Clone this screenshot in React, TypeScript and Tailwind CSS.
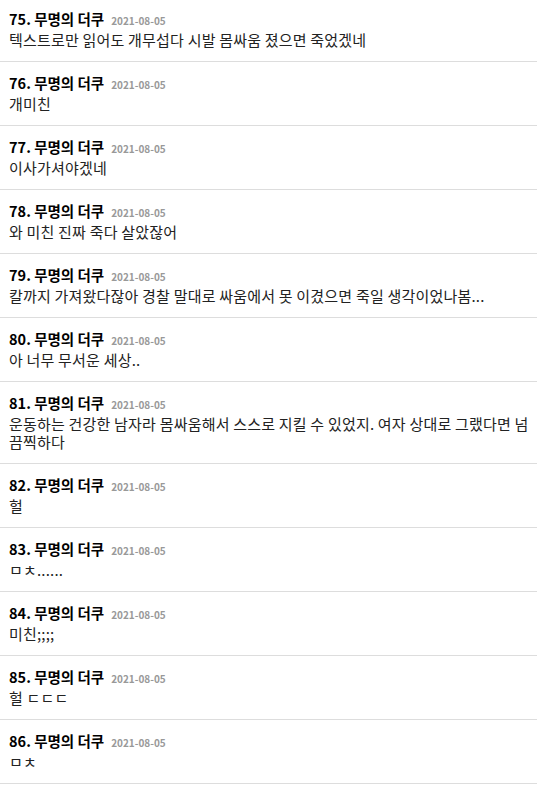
import React from 'react';

const comments: { n: number; text: string }[] = [
  { n: 75, text: '텍스트로만 읽어도 개무섭다 시발 몸싸움 졌으면 죽었겠네' },
  { n: 76, text: '개미친' },
  { n: 77, text: '이사가셔야겠네' },
  { n: 78, text: '와 미친 진짜 죽다 살았잖어' },
  { n: 79, text: '칼까지 가져왔다잖아 경찰 말대로 싸움에서 못 이겼으면 죽일 생각이었나봄...' },
  { n: 80, text: '아 너무 무서운 세상..' },
  { n: 81, text: '운동하는 건강한 남자라 몸싸움해서 스스로 지킬 수 있었지. 여자 상대로 그랬다면 넘 끔찍하다' },
  { n: 82, text: '헐' },
  { n: 83, text: 'ㅁㅊ......' },
  { n: 84, text: '미친;;;;' },
  { n: 85, text: '헐 ㄷㄷㄷ' },
  { n: 86, text: 'ㅁㅊ' },
];

const App: React.FC = () => {
  return (
    <div className="w-[537px] h-[788px] overflow-hidden bg-white font-['Noto_Sans_CJK_KR',sans-serif]">
      <ul className="-mt-[2px]">
        {comments.map((c) => (
          <li key={c.n} className="pl-[9px] pr-2 pt-[11px] pb-[12px] border-b border-[#dddddd]">
            <div className="flex items-baseline gap-[7px] h-5 leading-5">
              <span className="text-[14.5px] font-bold text-black">{c.n}. 무명의 더쿠</span>
              <span className="text-[10px] font-bold text-[#999999]">2021-08-05</span>
            </div>
            <p className="mt-[2px] text-[15px] tracking-[0.2px] leading-[18px] text-[#222222]">{c.text}</p>
          </li>
        ))}
      </ul>
    </div>
  );
};

export default App;
